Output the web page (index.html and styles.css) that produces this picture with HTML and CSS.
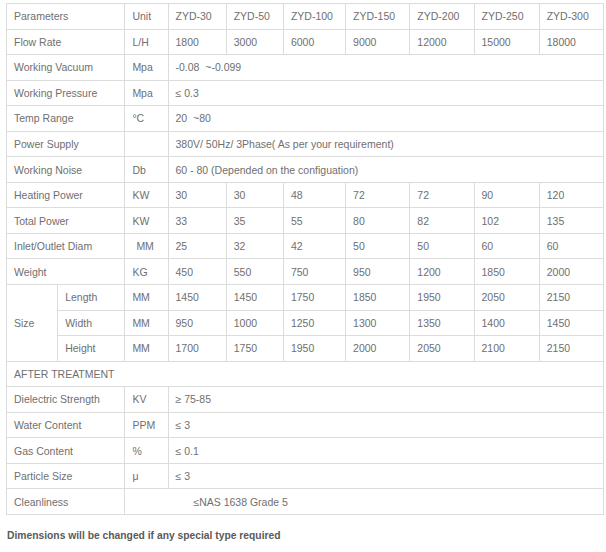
FILE: index.html
```html
<!DOCTYPE html>
<html>
<head>
<meta charset="utf-8">
<link rel="stylesheet" href="styles.css">
</head>
<body>
<div class="page">
<table class="spec">
  <colgroup>
    <col class="c-a"><col class="c-b"><col class="c-unit">
    <col class="c-30"><col class="c-50"><col class="c-100"><col class="c-m"><col class="c-m"><col class="c-250"><col class="c-m">
  </colgroup>
  <tr><td colspan="2">Parameters</td><td>Unit</td><td>ZYD-30</td><td>ZYD-50</td><td>ZYD-100</td><td>ZYD-150</td><td>ZYD-200</td><td>ZYD-250</td><td>ZYD-300</td></tr>
  <tr><td colspan="2">Flow Rate</td><td>L/H</td><td>1800</td><td>3000</td><td>6000</td><td>9000</td><td>12000</td><td>15000</td><td>18000</td></tr>
  <tr><td colspan="2">Working Vacuum</td><td>Mpa</td><td colspan="7">-0.08&nbsp; ~-0.099</td></tr>
  <tr><td colspan="2">Working Pressure</td><td>Mpa</td><td colspan="7">≤ 0.3</td></tr>
  <tr><td colspan="2">Temp Range</td><td>°C</td><td colspan="7">20&nbsp; ~80</td></tr>
  <tr><td colspan="2">Power Supply</td><td></td><td colspan="7">380V/ 50Hz/ 3Phase( As per your requirement)</td></tr>
  <tr><td colspan="2">Working Noise</td><td>Db</td><td colspan="7">60 - 80 (Depended on the configuation)</td></tr>
  <tr><td colspan="2">Heating Power</td><td>KW</td><td>30</td><td>30</td><td>48</td><td>72</td><td>72</td><td>90</td><td>120</td></tr>
  <tr><td colspan="2">Total Power</td><td>KW</td><td>33</td><td>35</td><td>55</td><td>80</td><td>82</td><td>102</td><td>135</td></tr>
  <tr><td colspan="2">Inlet/Outlet Diam</td><td class="shift">MM</td><td>25</td><td>32</td><td>42</td><td>50</td><td>50</td><td>60</td><td>60</td></tr>
  <tr><td colspan="2">Weight</td><td>KG</td><td>450</td><td>550</td><td>750</td><td>950</td><td>1200</td><td>1850</td><td>2000</td></tr>
  <tr><td rowspan="3">Size</td><td>Length</td><td>MM</td><td>1450</td><td>1450</td><td>1750</td><td>1850</td><td>1950</td><td>2050</td><td>2150</td></tr>
  <tr><td>Width</td><td>MM</td><td>950</td><td>1000</td><td>1250</td><td>1300</td><td>1350</td><td>1400</td><td>1450</td></tr>
  <tr><td>Height</td><td>MM</td><td>1700</td><td>1750</td><td>1950</td><td>2000</td><td>2050</td><td>2100</td><td>2150</td></tr>
  <tr><td colspan="10">AFTER TREATMENT</td></tr>
  <tr><td colspan="2">Dielectric Strength</td><td>KV</td><td colspan="7">≥ 75-85</td></tr>
  <tr><td colspan="2">Water Content</td><td>PPM</td><td colspan="7">≤ 3</td></tr>
  <tr><td colspan="2">Gas Content</td><td>%</td><td colspan="7">≤ 0.1</td></tr>
  <tr><td colspan="2">Particle Size</td><td>μ</td><td colspan="7">≤ 3</td></tr>
  <tr><td colspan="2">Cleanliness</td><td colspan="8" class="indent">≤NAS 1638 Grade 5</td></tr>
</table>
<p class="note">Dimensions will be changed if any special type required</p>
</div>
</body>
</html>
```

FILE: styles.css
```css
html, body {
  margin: 0;
  padding: 0;
  background: #ffffff;
}

.page {
  padding: 3px 0 0 6px;
  font-family: "Liberation Sans", Arial, sans-serif;
}

.spec {
  border-collapse: collapse;
  table-layout: fixed;
  width: 598px;
  font-size: 10.5px;
  color: #6f6f6f;
}

.c-a { width: 51px; }
.c-b { width: 67px; }
.c-unit { width: 43px; }
.c-30 { width: 58px; }
.c-50 { width: 57px; }
.c-100 { width: 62px; }
.c-m { width: 64px; }
.c-250 { width: 65px; }

.spec tr {
  height: 25.55px;
}

.spec td {
  border: 1px solid #dcdcdc;
  padding: 0 0 0 7px;
  vertical-align: middle;
  white-space: nowrap;
  overflow: hidden;
}

.spec td.shift {
  padding-left: 11px;
}

.spec td.indent {
  padding-left: 68px;
}

.note {
  margin: 15px 0 0 1px;
  font-size: 10.3px;
  font-weight: bold;
  color: #5a5a5a;
}
```
